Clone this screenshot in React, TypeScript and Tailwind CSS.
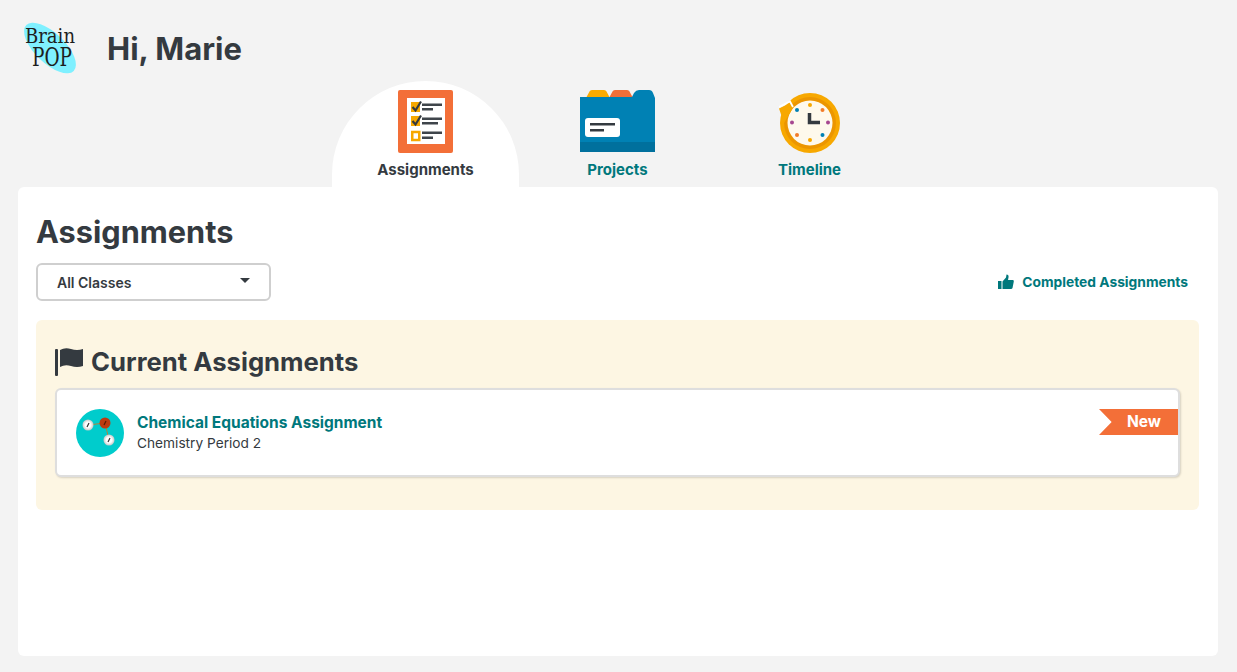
import React from 'react';

const font = { fontFamily: 'Inter, "Liberation Sans", sans-serif' };

function Logo() {
  return (
    <svg width="56" height="52" viewBox="0 0 56 52" className="shrink-0 overflow-visible">
      <ellipse cx="28" cy="26" rx="33" ry="15" fill="#7ff0ff" transform="rotate(44 28 26)" />
      <text x="3" y="21" fontFamily='"DejaVu Serif", serif' fontSize="20" textLength="50" lengthAdjust="spacingAndGlyphs" fill="#1d1d1d">Brain</text>
      <text x="10" y="44" fontFamily='"DejaVu Serif", serif' fontSize="26" textLength="40" lengthAdjust="spacingAndGlyphs" fill="#1d1d1d">POP</text>
    </svg>
  );
}

function ChecklistIcon() {
  return (
    <svg width="55" height="63" viewBox="0 0 55 63">
      <rect width="55" height="63" rx="2" fill="#f36f38" />
      <rect x="9" y="8" width="38" height="46" fill="#fff" />
      <rect x="13" y="12" width="9" height="10" fill="#f7a800" />
      <path d="M14.500 17l3 3.500 5.500-9" fill="none" stroke="#343a40" strokeWidth="2.200" />
      <rect x="24" y="13.500" width="20" height="2.500" fill="#3f454b" />
      <rect x="24" y="18" width="11" height="2.500" fill="#3f454b" />
      <rect x="13" y="26" width="9" height="10" fill="#f7a800" />
      <path d="M14.500 31l3 3.500 5.500-9" fill="none" stroke="#343a40" strokeWidth="2.200" />
      <rect x="24" y="27.500" width="20" height="2.500" fill="#3f454b" />
      <rect x="24" y="32" width="16" height="2.500" fill="#3f454b" />
      <rect x="14.250" y="42" width="7" height="8" fill="#fff" stroke="#f7a800" strokeWidth="2.500" />
      <rect x="24" y="41.500" width="20" height="2.500" fill="#3f454b" />
      <rect x="24" y="46.500" width="11" height="2.500" fill="#3f454b" />
    </svg>
  );
}

function FolderIcon() {
  return (
    <svg width="75" height="62" viewBox="0 0 75 62">
      <path d="M6 8L9.500 1.500Q10 0 12 0H24Q26 0 26.500 1.500L30 8Z" fill="#fbab00" />
      <path d="M29 8L32.500 1.500Q33 0 35 0H47Q49 0 49.500 1.500L53 8Z" fill="#f36f38" />
      <path d="M0 7H52L54 3Q56 0 59 0H69Q72 0 73 3L75 8V62H0Z" fill="#0081b4" />
      <rect y="52" width="75" height="10" fill="#00709d" />
      <rect x="5" y="28" width="35" height="19" rx="3" fill="#fff" />
      <rect x="10" y="33" width="25" height="2.500" fill="#343a40" />
      <rect x="10" y="39" width="14" height="2.500" fill="#343a40" />
    </svg>
  );
}

function ClockIcon() {
  return (
    <svg width="62" height="62" viewBox="0 0 62 62">
      <circle cx="31" cy="30" r="30" fill="#f7a800" />
      <circle cx="31" cy="30" r="26" fill="#ec9600" />
      <circle cx="31" cy="30" r="22.500" fill="#fef9ec" />
      <path d="M0 15.500L11 10L14 15L5 30Z" fill="#f7a800" />
      <path d="M0 14L11 8.500L14 14" fill="none" stroke="#fff" strokeWidth="1.800" />
      <circle cx="31" cy="12" r="2" fill="#f7a800" />
      <circle cx="31" cy="47" r="2" fill="#f7a800" />
      <circle cx="13" cy="29.500" r="2" fill="#a6478f" />
      <circle cx="49" cy="29.500" r="2" fill="#a6478f" />
      <circle cx="18" cy="17" r="2" fill="#0081b4" />
      <circle cx="43.500" cy="42" r="2" fill="#0081b4" />
      <circle cx="43.500" cy="17" r="2" fill="#f37c28" />
      <circle cx="18" cy="42" r="2" fill="#f37c28" />
      <path d="M30.500 20V29.500H41" fill="none" stroke="#343a40" strokeWidth="3.500" />
    </svg>
  );
}

function FlagIcon() {
  return (
    <svg width="29" height="29" viewBox="0 0 29 29">
      <rect y="2" width="3" height="27" rx="1" fill="#343a40" />
      <path d="M5 3Q10 0 16 2T28 2V19Q22 21 16 19T5 20Z" fill="#343a40" />
    </svg>
  );
}

function ThumbIcon() {
  return (
    <svg width="16" height="16" viewBox="0 0 16 16">
      <rect y="7" width="3.500" height="8" fill="#00787c" />
      <path d="M4.500 7.500L8 3.500L8.500 0.500Q11 0.500 10.500 3.500L10 6H15Q16 6 15.800 7.500L14.500 14Q14.200 15 13 15H4.500Z" fill="#00787c" />
    </svg>
  );
}

function MoleculeIcon() {
  return (
    <svg width="48" height="48" viewBox="0 0 48 48">
      <defs>
        <radialGradient id="atom">
          <stop offset="0.5" stopColor="#ffffff" />
          <stop offset="1" stopColor="#c4c8c8" />
        </radialGradient>
      </defs>
      <circle cx="24" cy="24" r="24" fill="#00cccc" />
      <path d="M12 16L29 14L33 31" fill="none" stroke="#b5813a" strokeWidth="1" />
      <circle cx="12" cy="16" r="5.500" fill="url(#atom)" />
      <circle cx="29" cy="14" r="5.500" fill="#bd3a10" />
      <circle cx="33" cy="31" r="5.500" fill="url(#atom)" />
      <path d="M11 18L13 14M32 33L34 29" stroke="#333" strokeWidth="1.200" />
      <path d="M28 16L30 12" stroke="#5a1a05" strokeWidth="1.200" />
    </svg>
  );
}

function Tab({ label, icon, active }: { label: string; icon: React.ReactNode; active?: boolean }) {
  return (
    <div
      className={`flex h-[106px] w-[187px] flex-col items-center justify-end pb-[8px] ${
        active ? 'rounded-t-[94px] bg-white text-[#343a40]' : 'text-[#00787c]'
      }`}
    >
      <div className="flex h-[63px] items-start justify-center">{icon}</div>
      <div className="mt-[9px] text-[15px] font-bold leading-[18px]">{label}</div>
    </div>
  );
}

export default function App() {
  return (
    <div style={font} className="flex h-[672px] flex-col overflow-hidden bg-[#f3f3f3] pb-[16px] pl-[18px] pr-[19px]">
      {/* Header */}
      <div className="flex h-[81px] items-start pl-[4px] pt-[22px]">
        <Logo />
        <h1 className="ml-[29px] mt-[5px] text-[31px] font-bold leading-[44px] text-[#343a40]">Hi, Marie</h1>
      </div>

      {/* Tabs */}
      <div className="flex gap-[5px] pl-[314px]">
        <Tab label="Assignments" icon={<div className="pt-[1px]"><ChecklistIcon /></div>} active />
        <Tab label="Projects" icon={<div className="pt-[1px]"><FolderIcon /></div>} />
        <Tab label="Timeline" icon={<div className="pt-[4px]"><ClockIcon /></div>} />
      </div>

      {/* Main card */}
      <div className="flex-1 rounded-md bg-white pl-[18px] pr-[19px] pt-[24px]">
        <h2 className="text-[30.700px] font-bold leading-[42px] text-[#343a40]">Assignments</h2>

        <div className="mt-[10px] flex items-center justify-between">
          <div className="flex h-[38px] w-[235px] items-center justify-between rounded-md border-2 border-[#cfcfcf] pl-[19px] pr-[19px]">
            <span className="text-[14px] font-semibold text-[#343a40]">All Classes</span>
            <span className="mb-[4px] h-0 w-0 border-x-[5px] border-t-[5px] border-x-transparent border-t-[#343a40]" />
          </div>
          <div className="flex items-center gap-[8px] pr-[11px] text-[13.800px] font-bold text-[#00787c]">
            <ThumbIcon />
            <span>Completed Assignments</span>
          </div>
        </div>

        {/* Current assignments */}
        <div className="mt-[19px] h-[190px] rounded-md bg-[#fdf6e3] px-[19px] pt-[24px]">
          <div className="flex h-[35px] items-center gap-[7px]">
            <FlagIcon />
            <h3 className="text-[25.700px] font-bold leading-[35px] text-[#343a40]">Current Assignments</h3>
          </div>
          <div className="mt-[9px] flex h-[89px] items-start rounded-md border-2 border-[#dedede] bg-white pl-[19px] pt-[19px] shadow-[1px_1px_2px_rgba(0,0,0,0.15)]">
            <MoleculeIcon />
            <div className="ml-[13px] mt-[3px] flex-1">
              <div className="text-[15.500px] font-bold leading-[21px] text-[#00787c]">Chemical Equations Assignment</div>
              <div className="text-[13.700px] leading-[20px] text-[#343a40]">Chemistry Period 2</div>
            </div>
            <div className="flex h-[26px] w-[79px] items-center justify-end bg-[#f36f38] pr-[17px] text-[15.500px] font-bold text-white [clip-path:polygon(0_0,100%_0,100%_100%,0_100%,16%_50%)]">
              New
            </div>
          </div>
        </div>
      </div>
    </div>
  );
}
